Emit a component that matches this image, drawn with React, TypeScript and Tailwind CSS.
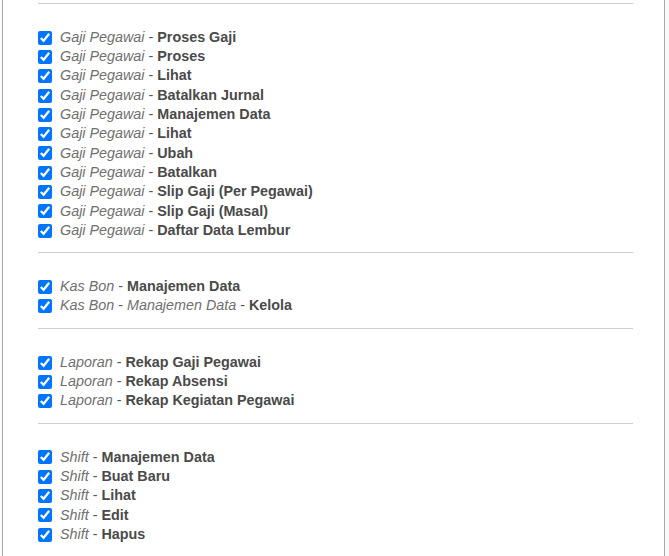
import React from 'react';

type Perm = { parts: string[]; action: string };

const groups: Perm[][] = [
  [
    { parts: ['Gaji Pegawai'], action: 'Proses Gaji' },
    { parts: ['Gaji Pegawai'], action: 'Proses' },
    { parts: ['Gaji Pegawai'], action: 'Lihat' },
    { parts: ['Gaji Pegawai'], action: 'Batalkan Jurnal' },
    { parts: ['Gaji Pegawai'], action: 'Manajemen Data' },
    { parts: ['Gaji Pegawai'], action: 'Lihat' },
    { parts: ['Gaji Pegawai'], action: 'Ubah' },
    { parts: ['Gaji Pegawai'], action: 'Batalkan' },
    { parts: ['Gaji Pegawai'], action: 'Slip Gaji (Per Pegawai)' },
    { parts: ['Gaji Pegawai'], action: 'Slip Gaji (Masal)' },
    { parts: ['Gaji Pegawai'], action: 'Daftar Data Lembur' },
  ],
  [
    { parts: ['Kas Bon'], action: 'Manajemen Data' },
    { parts: ['Kas Bon', 'Manajemen Data'], action: 'Kelola' },
  ],
  [
    { parts: ['Laporan'], action: 'Rekap Gaji Pegawai' },
    { parts: ['Laporan'], action: 'Rekap Absensi' },
    { parts: ['Laporan'], action: 'Rekap Kegiatan Pegawai' },
  ],
  [
    { parts: ['Shift'], action: 'Manajemen Data' },
    { parts: ['Shift'], action: 'Buat Baru' },
    { parts: ['Shift'], action: 'Lihat' },
    { parts: ['Shift'], action: 'Edit' },
    { parts: ['Shift'], action: 'Hapus' },
  ],
];

function Row({ perm }: { perm: Perm }) {
  return (
    <label className="flex items-center h-[19.3px] gap-[8px] text-[14.35px] whitespace-nowrap">
      <input
        type="checkbox"
        checked
        readOnly
        className="w-[14px] h-[14px] accent-[#0075ff]"
      />
      <span>
        {perm.parts.map((p, i) => (
          <span key={i}>
            <i className="text-[#707070]">{p}</i>
            <span className="text-[#555]"> - </span>
          </span>
        ))}
        <b className="text-[#4a4a4a] font-bold">{perm.action}</b>
      </span>
    </label>
  );
}

export default function App() {
  return (
    <div
      className="flex min-h-[556px] bg-[#fafafa]"
      style={{ fontFamily: '"Liberation Sans", Arial, sans-serif' }}
    >
      <div className="ml-[2px] w-[663px] min-h-[556px] bg-white border-x border-[#a8a8a8] pl-[35px] pr-[31px] pt-[3px]">
        {groups.map((g, gi) => (
          <div key={gi}>
            <div className="border-t border-[#cfcfcf]" />
            <div className="pt-[24px] pb-[12px]">
              {g.map((p, i) => (
                <Row key={i} perm={p} />
              ))}
            </div>
          </div>
        ))}
      </div>
    </div>
  );
}
